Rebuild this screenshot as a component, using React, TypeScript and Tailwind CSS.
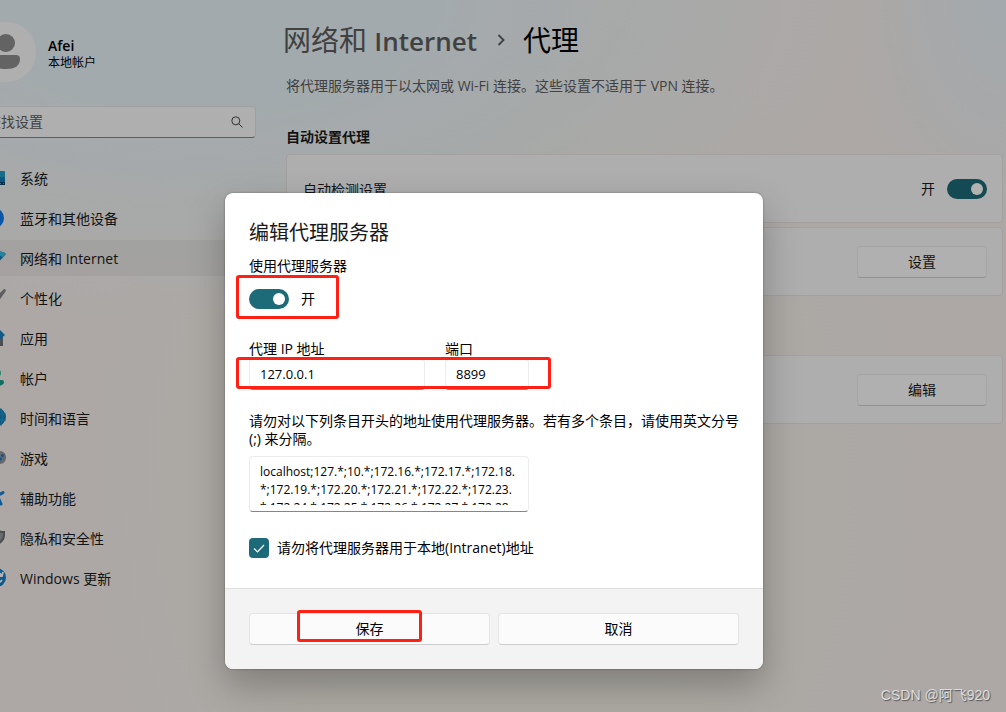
import React from "react";

const Icon = ({ children }: { children: React.ReactNode }) => (
  <svg viewBox="0 0 20 20" className="h-5 w-5 shrink-0" fill="none" aria-hidden="true">
    {children}
  </svg>
);

const navItems: { label: string; active?: boolean; icon: React.ReactNode }[] = [
  {
    label: "系统",
    icon: (
      <Icon>
        <rect x="0" y="3" width="19" height="14" rx="1" fill="#1f9cc6" />
        <rect x="0" y="9" width="19" height="5" fill="#0f7cb4" />
        <rect x="0" y="14" width="19" height="3" fill="#0c4468" />
        <path d="M14 15.500h1M17 15.500h1" stroke="#35a6dd" />
      </Icon>
    ),
  },
  {
    label: "蓝牙和其他设备",
    icon: (
      <Icon>
        <ellipse cx="9" cy="10" rx="9" ry="9.500" fill="#0f7af0" />
        <path d="M5 7l7 6-3 3V4l3 3-7 6" stroke="#fff" strokeWidth="1.200" />
      </Icon>
    ),
  },
  {
    label: "网络和 Internet",
    active: true,
    icon: (
      <Icon>
        <path d="M0 7Q10-1 20 6L10 17z" fill="#1279bd" />
        <path d="M0 7Q10-1 20 6L17 9.500Q10 4 3 9.500z" fill="#35bce3" />
      </Icon>
    ),
  },
  {
    label: "个性化",
    icon: (
      <Icon>
        <path d="M18 1q2.500 0 1.500 2.500L12 14l-4-3z" fill="#85878c" />
        <path d="M8 11l4 3q-3 4-9 3 3-1 5-6z" fill="#2690d8" />
      </Icon>
    ),
  },
  {
    label: "应用",
    icon: (
      <Icon>
        <rect x="0" y="9" width="17" height="9" fill="#6c7077" />
        <path d="M12 0l7 7-7 6-6-6z" fill="#1583c7" />
      </Icon>
    ),
  },
  {
    label: "帐户",
    icon: (
      <Icon>
        <circle cx="10" cy="5" r="5" fill="#2bbd9c" />
        <path d="M2 12h14q2 0 2 2 0 4-8 4t-8-4q0-2 2-2z" fill="#17a189" />
      </Icon>
    ),
  },
  {
    label: "时间和语言",
    icon: (
      <Icon>
        <circle cx="11" cy="9" r="9" fill="#1580b8" />
        <path d="M2 6h18M2 12h18M15 0q3 9 0 18" stroke="#2b9fce" strokeWidth="0.800" />
      </Icon>
    ),
  },
  {
    label: "游戏",
    icon: (
      <Icon>
        <rect x="0" y="3" width="20" height="13" rx="6" fill="#92969b" />
        <circle cx="14.500" cy="11" r="1.500" fill="#1976c8" />
        <circle cx="16.500" cy="7.500" r="1.500" fill="#1976c8" />
      </Icon>
    ),
  },
  {
    label: "辅助功能",
    icon: (
      <Icon>
        <circle cx="10" cy="2.500" r="2.500" fill="#1482d8" />
        <path d="M2 5.500q8 4 15-1M11 7l4 9" stroke="#1482d8" strokeWidth="3" strokeLinecap="round" />
      </Icon>
    ),
  },
  {
    label: "隐私和安全性",
    icon: (
      <Icon>
        <path d="M10 1q4 2 9 2v4q0 7-9 11Q1 14 1 7V3q5 0 9-2z" fill="#6a7075" />
        <path d="M10 3.500q4 1.500 7 1.500v2q0 5-7 8.500z" fill="#999da1" />
      </Icon>
    ),
  },
  {
    label: "Windows 更新",
    icon: (
      <Icon>
        <circle cx="10.500" cy="9.500" r="9.500" fill="#1480cf" />
        <path d="M6 6q6-4 10 2M17 4l-1 4h-4M16 12q-5 6-10 1" stroke="#fff" strokeWidth="1.800" />
      </Icon>
    ),
  },
];

const Switch = ({ label }: { label: string }) => (
  <input
    type="checkbox"
    role="switch"
    defaultChecked
    aria-label={label}
    className="flex h-5 w-10 shrink-0 appearance-none items-center rounded-full bg-[#1d6a78] px-1 before:h-3 before:w-3 before:rounded-full before:bg-white checked:justify-end"
  />
);

const Card = ({ label, children }: { label?: string; children: React.ReactNode }) => (
  <div className="flex h-[69px] items-center rounded border border-[#e9e4e3] bg-[#fbf9fa] pr-[15px] pl-4">
    {label && <span className="pt-0.5">{label}</span>}
    <div className="ml-auto">{children}</div>
  </div>
);

const cardButton =
  "h-8 w-[130px] rounded border border-[#ececec] border-b-[#d0d0d0] bg-[#fdfcfc]";

const dialogButton =
  "h-8 w-full rounded border border-[#e5e5e5] border-b-[#cccccc] bg-[#fbfbfb]";

const field =
  "block h-[31px] w-full rounded border border-[#ececec] border-b-[#868686] bg-white px-2.5 pb-0.5 text-[13px] outline-none";

const mark =
  "pointer-events-none absolute rounded-[3px] border-3 border-[#ff2015]";

export default function App() {
  return (
    <div
      className="relative min-h-screen overflow-hidden bg-[#f8f1ee] bg-[radial-gradient(ellipse_660px_320px_at_20%_0%,#eaf4f8_35%,transparent_100%),radial-gradient(ellipse_160px_240px_at_100%_0%,#eaf2f6_10%,transparent_100%),radial-gradient(ellipse_420px_520px_at_50%_70%,#f6f2e8_50%,transparent_100%)] text-sm leading-5 text-[#1a1a1a]"
      style={{ fontFamily: '"Open Sans", "Noto Sans CJK SC", sans-serif' }}
    >
      <div className="flex min-h-screen">
        <aside className="-ml-6 w-[280px] shrink-0 pt-[22px]">
          <div className="flex items-center gap-3">
            <svg viewBox="0 0 60 60" className="h-[60px] w-[60px]" aria-hidden="true">
              <circle cx="30" cy="30" r="30" fill="#fbfbfb" />
              <circle cx="30" cy="21" r="9" fill="#8f8f8f" />
              <path d="M20 33h20q4 0 4 4 0 10-14 10T16 37q0-4 4-4z" fill="#8f8f8f" />
            </svg>
            <div className="pt-1 text-black">
              <div className="text-sm leading-[18px] font-semibold">Afei</div>
              <div className="text-xs leading-4">本地帐户</div>
            </div>
          </div>
          <div className="mt-6 flex h-8 items-center rounded border border-[#e2e4e6] border-b-[#868686] bg-[#fbfbfb] pr-3 pl-2.5">
            <input
              type="text"
              placeholder="查找设置"
              aria-label="查找设置"
              className="min-w-0 flex-1 bg-transparent outline-none placeholder:text-[#5d5d5d]"
            />
            <svg viewBox="0 0 12 12" className="h-3 w-3" fill="none" stroke="#454545" aria-hidden="true">
              <circle cx="4.800" cy="4.800" r="4" />
              <path d="M7.800 7.800l3.700 3.700" />
            </svg>
          </div>
          <nav className="mt-[22px] flex flex-col gap-1">
            {navItems.map((item) => (
              <a
                key={item.label}
                href="#"
                aria-current={item.active ? "page" : undefined}
                className={
                  item.active
                    ? "flex h-9 items-center gap-3.5 bg-black/4 pl-2.5"
                    : "flex h-9 items-center gap-3.5 pl-2.5"
                }
              >
                {item.icon}
                <span className="pt-0.5">{item.label}</span>
              </a>
            ))}
          </nav>
        </aside>

        <main className="min-w-0 flex-1 pt-5 pr-[3px] pl-[30px]">
          <h1 className="-ml-[3px] flex h-10 items-center text-[28px] leading-10 text-black">
            <a href="#" className="text-[#5d5d5d]">
              网络和 <span className="text-[26px] font-semibold">Internet</span>
            </a>
            <svg viewBox="0 0 8 12" className="mr-[18px] ml-5 h-3 w-2" fill="none" stroke="#5d5d5d" strokeWidth="1.800" aria-hidden="true">
              <path d="M1.500 1l5 5-5 5" />
            </svg>
            代理
          </h1>
          <p className="mt-4 text-[#5d5d5d]">
            将代理服务器用于以太网或 Wi-Fi 连接。这些设置不适用于 VPN 连接。
          </p>
          <h2 className="mt-[31px] font-bold">自动设置代理</h2>
          <div className="mt-[7px] flex flex-col gap-1">
            <Card label="自动检测设置">
              <span className="flex items-center gap-3">
                开
                <Switch label="自动检测设置" />
              </span>
            </Card>
            <Card>
              <button type="button" className={cardButton}>设置</button>
            </Card>
          </div>
          <div className="mt-[59px]">
            <Card>
              <button type="button" className={cardButton}>编辑</button>
            </Card>
          </div>
        </main>
      </div>

      <div className="absolute inset-0 flex items-start justify-center bg-black/30 pt-[193px] pr-[18px]">
        <div
          role="dialog"
          aria-labelledby="dialog-title"
          className="w-[538px] max-w-full overflow-hidden rounded-lg bg-white text-black shadow-[0_0_2px_rgba(0,0,0,0.4),0_16px_36px_rgba(0,0,0,0.26)]"
        >
          <div className="px-6 pt-[25px] pb-[30px]">
            <h2 id="dialog-title" className="text-xl leading-[30px] text-[#1a1a1a]">编辑代理服务器</h2>
            <div className="mt-[7px] leading-[22px]">使用代理服务器</div>
            <div className="relative mt-3 flex items-center gap-3">
              <Switch label="使用代理服务器" />
              开
              <span className={`${mark} -top-3.5 -left-[13px] h-11 w-[103px]`} />
            </div>
            <div className="relative mt-[30px] flex gap-5">
              <div className="w-44">
                <label htmlFor="ip" className="block">代理 IP 地址</label>
                <input id="ip" type="text" defaultValue="127.0.0.1" className={field} />
              </div>
              <div className="w-[84px]">
                <label htmlFor="port" className="block">端口</label>
                <input id="port" type="text" defaultValue="8899" className={field} />
              </div>
              <span className={`${mark} top-[18px] -left-[13px] h-8 w-[315px]`} />
            </div>
            <label htmlFor="exceptions" className="mt-[22px] block leading-[18px]">
              请勿对以下列条目开头的地址使用代理服务器。若有多个条目，请使用英文分号 (;) 来分隔。
            </label>
            <div className="mt-2 h-14 w-[280px] rounded border border-[#ececec] border-b-[#868686] py-1.5 pr-[11px] pl-2.5">
              <textarea
                id="exceptions"
                className="block h-full w-full resize-none overflow-hidden text-xs leading-[18px] break-all outline-none"
                defaultValue="localhost;127.*;10.*;172.16.*;172.17.*;172.18.*;172.19.*;172.20.*;172.21.*;172.22.*;172.23.*;172.24.*;172.25.*;172.26.*;172.27.*;172.28.*;172.29.*;172.30.*;172.31.*;192.168.*"
              />
            </div>
            <label className="mt-[26px] flex items-center gap-2">
              <span className="grid">
                <input
                  type="checkbox"
                  defaultChecked
                  className="col-start-1 row-start-1 h-5 w-5 appearance-none rounded bg-[#1d6a78]"
                />
                <svg viewBox="0 0 20 20" className="pointer-events-none col-start-1 row-start-1 h-5 w-5" fill="none" stroke="#fff" strokeWidth="1.200" aria-hidden="true">
                  <path d="M5 10.500l3.500 3.500 6.500-7" />
                </svg>
              </span>
              请勿将代理服务器用于本地(Intranet)地址
            </label>
          </div>
          <div className="grid grid-cols-2 gap-2 border-t border-[#e0e0e0] bg-[#f3f3f3] p-6">
            <div className="relative">
              <button type="button" className={dialogButton}>保存</button>
              <span className={`${mark} -top-[3px] left-12 h-8 w-[125px]`} />
            </div>
            <button type="button" className={dialogButton}>取消</button>
          </div>
        </div>
      </div>

      <div className="absolute right-4 bottom-[7px] font-['Liberation_Sans','Noto_Sans_CJK_SC',sans-serif] text-sm text-[#dcdcdc] [text-shadow:1px_1px_1px_#555]">
        CSDN @阿飞920
      </div>
    </div>
  );
}
